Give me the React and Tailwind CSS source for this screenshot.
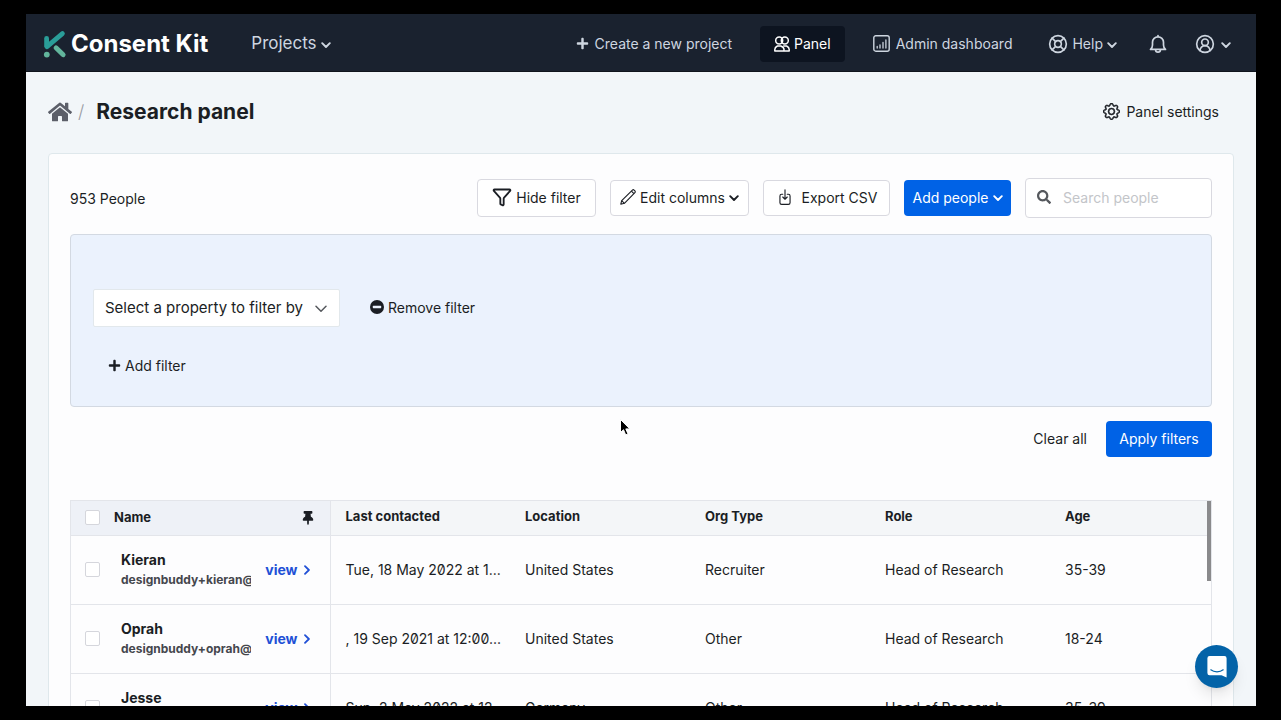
import { useState } from 'react'
import { CircleUserRound, Filter, LifeBuoy } from 'lucide-react'
import { BsGear } from 'react-icons/bs'
import { FaHome, FaPlus, FaSearch, FaThumbtack } from 'react-icons/fa'
import { HiOutlineArrowDownOnSquare } from 'react-icons/hi2'

const COLUMNS = ['Last contacted', 'Location', 'Org Type', 'Role', 'Age']

const PEOPLE = [
  {
    name: 'Kieran',
    email: 'designbuddy+kieran@',
    cells: ['Tue, 18 May 2022 at 1...', 'United States', 'Recruiter', 'Head of Research', '35-39'],
  },
  {
    name: 'Oprah',
    email: 'designbuddy+oprah@g',
    cells: [', 19 Sep 2021 at 12:00...', 'United States', 'Other', 'Head of Research', '18-24'],
  },
  {
    name: 'Jesse',
    email: 'designbuddy+jesse@g',
    cells: ['Sun, 2 May 2022 at 12...', 'Germany', 'Other', 'Head of Research', '35-39'],
  },
]

// ─── Icons ────────────────────────────────────────────────────────────────────

function LogoMark() {
  return (
    <svg className="w-6 h-8" viewBox="0 0 24 32" fill="none" strokeLinecap="round" strokeWidth="4.8">
      <path d="M3.6 10.500V18" stroke="#2a9d98" />
      <path d="M4 18.600L19.400 5.600" stroke="#2a9d98" />
      <path d="M13 19.800L20.200 26.800" stroke="#62b59c" />
      <circle cx="3.800" cy="26.600" r="2.900" fill="#62b59c" />
    </svg>
  )
}

function Caret() {
  return (
    <svg className="w-2.5 h-2.5 mt-0.5" viewBox="0 0 10 10" fill="none" stroke="currentColor" strokeWidth="1.9" strokeLinecap="round" strokeLinejoin="round">
      <path d="M1.200 3.200L5 7l3.800-3.800" />
    </svg>
  )
}

function PeopleIcon() {
  return (
    <svg className="w-4 h-4" viewBox="0 0 16 16" fill="none" stroke="currentColor" strokeWidth="1.5" strokeLinejoin="round">
      <circle cx="5.200" cy="4.400" r="3.500" />
      <circle cx="10.800" cy="4.400" r="3.500" />
      <path d="M.8 15.100v-1.500c0-1.600 1-2.800 2.600-3.600h3.400c2 .8 3.200 2 3.200 3.600v1.500z" />
      <path d="M9.200 10h3.400c1.600.8 2.600 2 2.600 3.600v1.500h-5" />
    </svg>
  )
}

function DashboardIcon() {
  return (
    <svg className="w-[17px] h-[17px]" viewBox="0 0 17 17" fill="none" stroke="currentColor" strokeLinecap="round">
      <rect x=".8" y=".8" width="15.400" height="15.400" rx="2" strokeWidth="1.400" />
      <path d="M4.200 13v-1.500M7 13V9.800M10 13V7.500M12.900 13V4.800" strokeWidth="1.300" />
    </svg>
  )
}

function BellIcon() {
  return (
    <svg className="w-[18px] h-5" viewBox="0 0 18 20" fill="none" stroke="currentColor" strokeWidth="1.7" strokeLinecap="round" strokeLinejoin="round">
      <path d="M9 1.600v1M1.500 15.400h15c-1.500-1.200-2-2.400-2-4.400V8.300a5.500 5.500 0 0 0-11 0V11c0 2-.5 3.200-2 4.400z" />
      <path d="M6.600 15.800a2.400 2.400 0 0 0 4.800 0" />
    </svg>
  )
}

function PencilIcon() {
  return (
    <svg className="w-4 h-4" viewBox="0 0 16 16" fill="none" stroke="currentColor" strokeWidth="1.1" strokeLinejoin="round">
      <path d="M.8 15.200l.9-3.600L12.400 1.100c.5-.5 1.200-.5 1.700 0l.8.8c.5.5.5 1.200 0 1.700L4.400 14.300z" />
      <path d="M1.700 11.600l2.700 2.700M11.400 2.100l2.500 2.500" />
    </svg>
  )
}

function MinusIcon() {
  return (
    <svg className="w-3.5 h-3.5" viewBox="0 0 14 14">
      <circle cx="7" cy="7" r="7" fill="currentColor" />
      <rect x="2.800" y="5.800" width="8.400" height="2.400" rx=".6" fill="#ebf2fd" />
    </svg>
  )
}

function ChatIcon() {
  return (
    <svg className="w-5 h-[22px]" viewBox="0 0 20 22">
      <path d="M2.600 0h14.800A2.200 2.200 0 0 1 19.600 2.200V21.500L14.500 19.300H2.600A2.200 2.200 0 0 1 .4 17.100V2.200A2.200 2.200 0 0 1 2.600 0z" fill="#fff" />
      <path d="M3.800 13.800c3.400 2.700 9 2.700 12.400 0" fill="none" stroke="#0363a8" strokeWidth="1.200" strokeLinecap="round" />
    </svg>
  )
}

function Cursor() {
  return (
    <svg className="absolute left-[619px] top-[418px] w-3 h-[19px] pointer-events-none" viewBox="0 0 12 19">
      <path d="M1.500 1.500v13l3-2.800 2.200 5.200 2.300-1-2.200-5h4z" fill="#000" stroke="#fff" />
    </svg>
  )
}

// ─── Top bar ──────────────────────────────────────────────────────────────────

function TopBar() {
  return (
    <header className="flex h-[58px] shrink-0 items-center border-b border-[#10151d] bg-[#1a222f] pt-0.5 pl-[17px] pr-[25px] text-[#ced6e0]">
      <a href="#home" className="flex items-center gap-1 text-[24px] font-bold text-white">
        <LogoMark />
        Consent Kit
      </a>
      <button className="ml-[43px] flex items-center gap-1 text-[17px]">
        Projects
        <Caret />
      </button>
      <nav className="ml-auto flex items-center">
        <a href="#new" className="flex items-center gap-1.5">
          <FaPlus className="w-[13px] h-[13px]" />
          Create a new project
        </a>
        <a href="#panel" className="ml-7 flex h-9 items-center gap-1 rounded bg-[#0d1420] px-[14px] text-white">
          <PeopleIcon />
          Panel
        </a>
        <a href="#admin" className="ml-7 flex items-center gap-1.5">
          <DashboardIcon />
          Admin dashboard
        </a>
        <button className="ml-9 flex items-center gap-1">
          <LifeBuoy className="w-5 h-5" strokeWidth={2} />
          Help
          <Caret />
        </button>
        <button aria-label="Notifications" className="ml-8">
          <BellIcon />
        </button>
        <button aria-label="Account" className="ml-7 flex items-center gap-1.5">
          <CircleUserRound className="w-5 h-5" strokeWidth={2} />
          <Caret />
        </button>
      </nav>
    </header>
  )
}

// ─── Toolbar ──────────────────────────────────────────────────────────────────

function Toolbar({ filterOpen, onToggleFilter }) {
  return (
    <div className="flex items-center gap-[14px]">
      <p className="mr-auto">953 People</p>
      <button
        onClick={onToggleFilter}
        className="flex h-[38px] w-[119px] items-center justify-center gap-1 rounded border border-[#d9d9e0] bg-white pb-0.5"
      >
        <Filter className="w-5 h-5" strokeWidth={2.2} />
        {filterOpen ? 'Hide filter' : 'Show filter'}
      </button>
      <button className="flex h-9 w-[139px] items-center justify-center gap-1 rounded border border-[#d9d9e0] bg-white pb-0.5">
        <PencilIcon />
        Edit columns
        <Caret />
      </button>
      <button className="flex h-9 w-[127px] items-center justify-center gap-2 rounded border border-[#d9d9e0] bg-white pb-0.5">
        <HiOutlineArrowDownOnSquare className="w-[18px] h-[18px]" />
        Export CSV
      </button>
      <button className="flex h-9 w-[107px] items-center justify-center gap-1 rounded bg-[#0062e6] pb-0.5 text-white">
        Add people
        <Caret />
      </button>
      <label className="flex h-10 w-[187px] items-center gap-3 rounded border border-[#d9d9e0] bg-white px-[11px] pb-0.5">
        <FaSearch className="w-[14px] h-[14px] shrink-0 text-[#55585d]" />
        <input
          type="search"
          aria-label="Search people"
          placeholder="Search people"
          className="w-full min-w-0 outline-none placeholder:text-[#c3c5c9]"
        />
      </label>
    </div>
  )
}

// ─── Filters ──────────────────────────────────────────────────────────────────

function FilterPanel() {
  return (
    <div className="mt-4 rounded-sm border border-[#d3d9e2] bg-[#ebf2fd] px-[22px] pt-[54px] pb-[29px]">
      <div className="flex items-center gap-[30px]">
        <div className="relative">
          <select
            aria-label="Property"
            className="h-[38px] w-[247px] appearance-none rounded-xs border border-[#e2e8ec] bg-white pl-[11px] text-[15px] outline-none"
          >
            <option>Select a property to filter by</option>
            {COLUMNS.map(c => <option key={c}>{c}</option>)}
          </select>
          <svg className="pointer-events-none absolute right-[13px] top-4 h-2 w-3 text-[#55585d]" viewBox="0 0 12 8" fill="none" stroke="currentColor" strokeWidth="1.5" strokeLinecap="round" strokeLinejoin="round">
            <path d="M1 1.200l5 5 5-5" />
          </svg>
        </div>
        <button className="flex items-center gap-1 pb-0.5">
          <MinusIcon />
          Remove filter
        </button>
      </div>
      <button className="ml-[15px] mt-[26px] flex h-6 items-center gap-1">
        <FaPlus className="w-[13px] h-[13px]" />
        Add filter
      </button>
    </div>
  )
}

// ─── Table ────────────────────────────────────────────────────────────────────

function Checkbox({ label }) {
  return (
    <input
      type="checkbox"
      aria-label={label}
      className="block h-[15px] w-[15px] shrink-0 appearance-none rounded-xs border border-[#d5d6dc] bg-white checked:bg-[#0062e6]"
    />
  )
}

function PeopleTable() {
  return (
    <div className="relative mt-[43px] border border-[#e3e5ea]">
      <table className="w-full table-fixed text-left">
        <thead>
          <tr className="h-[34px] bg-[#f4f6f8] text-[13px]">
            <th className="w-[259px] border-r border-[#e3e5ea] bg-[#eef1f7] p-0">
              <div className="flex items-center gap-[14px] pl-[14px] pr-4">
                <Checkbox label="Select everyone" />
                Name
                <FaThumbtack className="ml-auto w-3 h-[14px]" />
              </div>
            </th>
            {COLUMNS.map(c => (
              <th key={c} className="w-[180px] px-[15px] pt-0 pb-0.5 last:w-auto">{c}</th>
            ))}
          </tr>
        </thead>
        <tbody className="slashed-zero">
          {PEOPLE.map(person => (
            <tr key={person.name} className="h-[69px] border-t border-[#e3e5ea]">
              <td className="border-r border-[#e3e5ea] p-0">
                <div className="flex items-center pl-[14px] pr-5">
                  <Checkbox label={`Select ${person.name}`} />
                  <div className="ml-[21px] w-[130px] overflow-hidden whitespace-nowrap font-bold leading-5">
                    <div>{person.name}</div>
                    <div className="text-[12px] text-[#45474d]">{person.email}</div>
                  </div>
                  <a href={`#${person.name}`} className="ml-auto flex items-center gap-1.5 font-bold text-[#2150d6]">
                    view
                    <svg className="h-2.5 w-1.5" viewBox="0 0 6 10" fill="none" stroke="currentColor" strokeWidth="1.8" strokeLinecap="round" strokeLinejoin="round">
                      <path d="M1 1.200L4.900 5 1 8.800" />
                    </svg>
                  </a>
                </div>
              </td>
              {person.cells.map((cell, i) => (
                <td key={i} className="whitespace-nowrap px-[15px] py-0">{cell}</td>
              ))}
            </tr>
          ))}
        </tbody>
      </table>
      <div className="absolute right-0 top-0 h-20 w-1 bg-[#8a8a8c]" />
    </div>
  )
}

// ─── Page ─────────────────────────────────────────────────────────────────────

export default function App() {
  const [filterOpen, setFilterOpen] = useState(true)

  return (
    <div className="h-screen bg-black pl-[26px] pr-[25px] py-[14px] font-['Inter',sans-serif] text-[14px] text-[#1b1e24]">
      <div className="flex h-full flex-col overflow-hidden bg-[#f2f6f9]">
        <TopBar />
        <main className="min-h-0 grow px-[22px]">
          <div className="flex h-[81px] items-center pb-0.5">
            <a href="#home" aria-label="Home" className="text-[#5c5f69]">
              <FaHome className="w-6 h-6" />
            </a>
            <span className="ml-1.5 text-[18px] font-light text-[#9a9da5]">/</span>
            <h1 className="ml-3 text-[21px] font-bold">Research panel</h1>
            <a href="#settings" className="ml-auto mr-[15px] flex items-center gap-1.5">
              <BsGear className="w-[17px] h-[17px]" strokeWidth={0.5} />
              Panel settings
            </a>
          </div>

          <section className="rounded-sm border border-[#dfe8ec] bg-[#fdfdfe] px-[21px] pt-6 pb-6">
            <Toolbar filterOpen={filterOpen} onToggleFilter={() => setFilterOpen(o => !o)} />
            {filterOpen && <FilterPanel />}
            <div className="mt-[14px] flex items-center justify-end gap-[19px]">
              <button className="pb-0.5">Clear all</button>
              <button className="h-9 w-[106px] rounded bg-[#0062e6] pb-0.5 text-white">Apply filters</button>
            </div>
            <PeopleTable />
          </section>
        </main>
      </div>

      <Cursor />
      <button
        aria-label="Open chat"
        className="absolute right-[43px] bottom-8 flex h-[43px] w-[43px] items-center justify-center rounded-full bg-[#0363a8] shadow-lg"
      >
        <ChatIcon />
      </button>
    </div>
  )
}
